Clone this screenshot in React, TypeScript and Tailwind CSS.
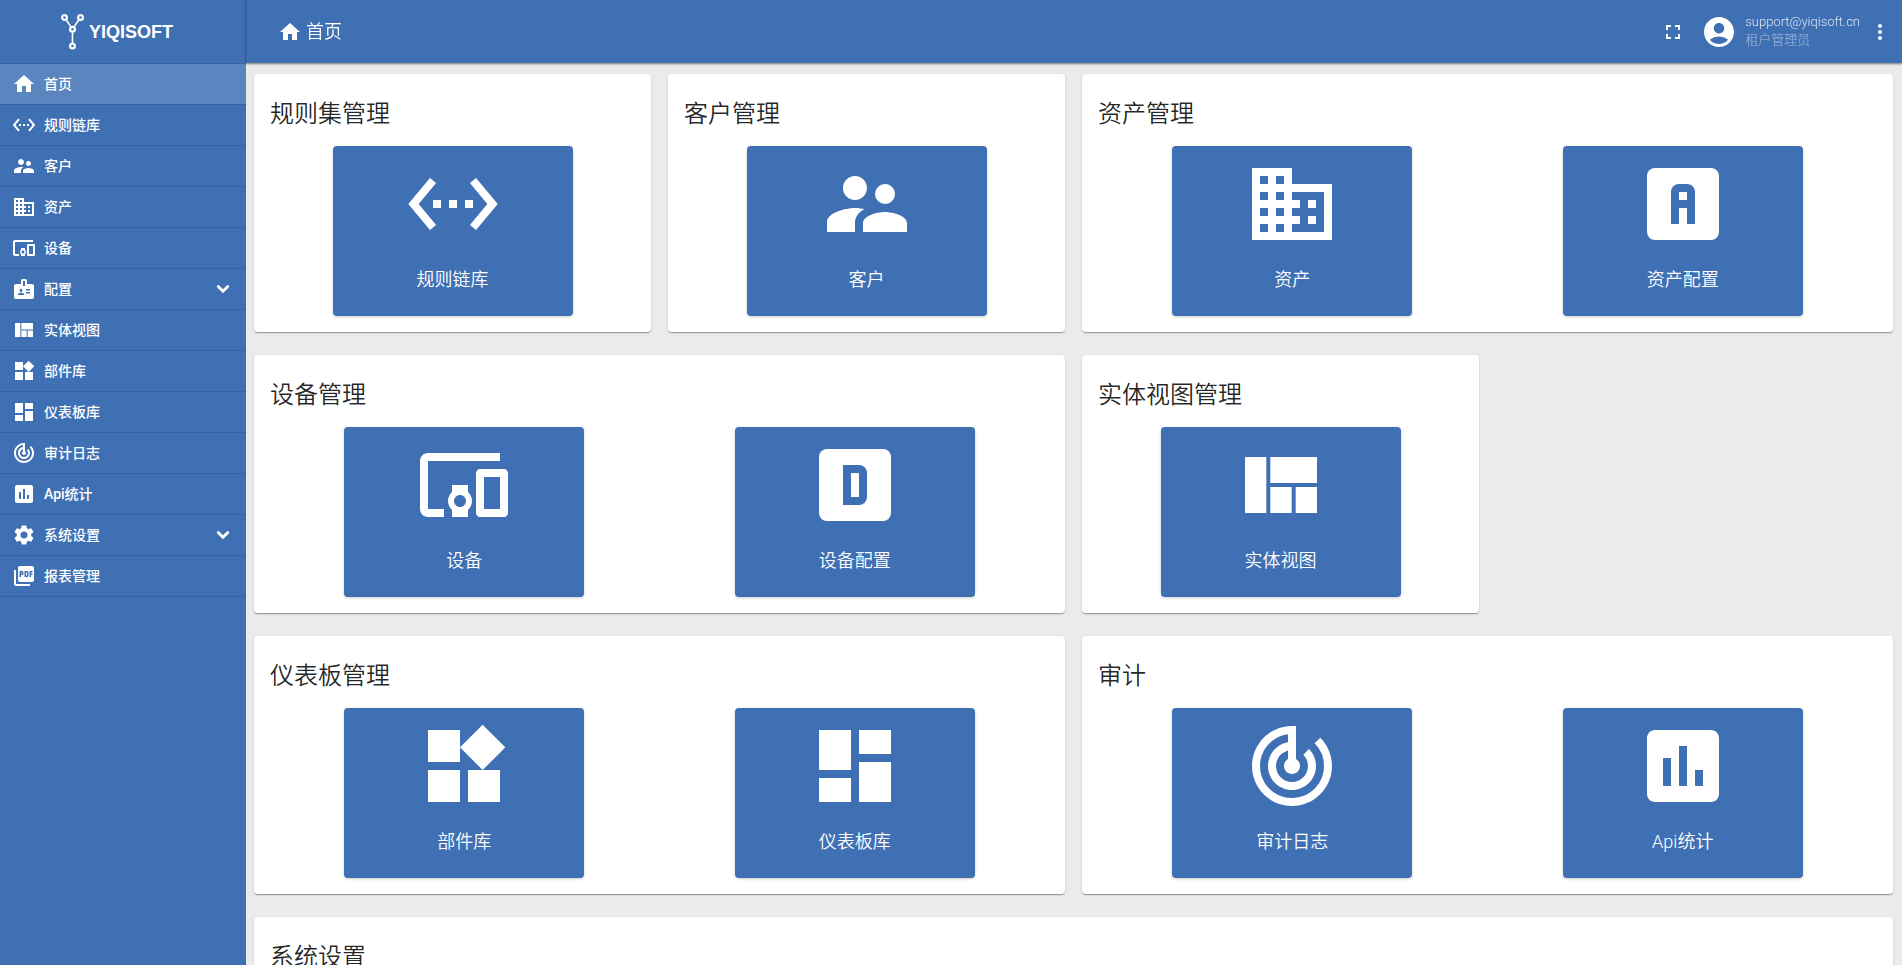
import type { ComponentType } from 'react';
import {
  MdAccountCircle,
  MdBadge,
  MdDashboard,
  MdDevicesOther,
  MdDomain,
  MdFullscreen,
  MdHome,
  MdInsertChart,
  MdMoreVert,
  MdPictureAsPdf,
  MdSettings,
  MdSettingsEthernet,
  MdSupervisorAccount,
  MdTrackChanges,
  MdWidgets,
} from 'react-icons/md';

type Icon = ComponentType<{ className?: string }>;

type MenuItem = {
  label: string;
  icon: Icon;
  active?: boolean;
  expandable?: boolean;
};

type Tile = {
  label: string;
  icon: Icon;
};

type Section = {
  title: string;
  wide?: boolean;
  full?: boolean;
  tiles: Tile[];
};

const ViewQuiltIcon: Icon = ({ className }) => (
  <svg viewBox="0 0 24 24" fill="currentColor" className={className} aria-hidden="true">
    <rect x="3" y="5" width="5.33" height="14" />
    <rect x="9.33" y="5" width="11.67" height="6.5" />
    <rect x="9.33" y="12.5" width="5.33" height="6.5" />
    <rect x="15.67" y="12.5" width="5.33" height="6.5" />
  </svg>
);

const AssetProfileIcon: Icon = ({ className }) => (
  <svg viewBox="0 0 24 24" fill="currentColor" className={className} aria-hidden="true">
    <rect x="3" y="3" width="18" height="18" rx="2" />
    <rect x="9" y="7" width="6" height="6" rx="2" fill="#3f70b4" />
    <rect x="9" y="9" width="6" height="8" fill="#3f70b4" />
    <rect x="11" y="9" width="2" height="2" />
    <rect x="11" y="13" width="2" height="4" />
  </svg>
);

const DeviceProfileIcon: Icon = ({ className }) => (
  <svg viewBox="0 0 24 24" fill="currentColor" className={className} aria-hidden="true">
    <rect x="3" y="3" width="18" height="18" rx="2" />
    <rect x="9" y="7" width="6" height="10" rx="2" fill="#3f70b4" />
    <rect x="9" y="7" width="3" height="10" fill="#3f70b4" />
    <rect x="11" y="9" width="2" height="6" />
  </svg>
);

const menuItems: MenuItem[] = [
  { label: '首页', icon: MdHome, active: true },
  { label: '规则链库', icon: MdSettingsEthernet },
  { label: '客户', icon: MdSupervisorAccount },
  { label: '资产', icon: MdDomain },
  { label: '设备', icon: MdDevicesOther },
  { label: '配置', icon: MdBadge, expandable: true },
  { label: '实体视图', icon: ViewQuiltIcon },
  { label: '部件库', icon: MdWidgets },
  { label: '仪表板库', icon: MdDashboard },
  { label: '审计日志', icon: MdTrackChanges },
  { label: 'Api统计', icon: MdInsertChart },
  { label: '系统设置', icon: MdSettings, expandable: true },
  { label: '报表管理', icon: MdPictureAsPdf },
];

const sections: Section[] = [
  { title: '规则集管理', tiles: [{ label: '规则链库', icon: MdSettingsEthernet }] },
  { title: '客户管理', tiles: [{ label: '客户', icon: MdSupervisorAccount }] },
  {
    title: '资产管理',
    wide: true,
    tiles: [
      { label: '资产', icon: MdDomain },
      { label: '资产配置', icon: AssetProfileIcon },
    ],
  },
  {
    title: '设备管理',
    wide: true,
    tiles: [
      { label: '设备', icon: MdDevicesOther },
      { label: '设备配置', icon: DeviceProfileIcon },
    ],
  },
  { title: '实体视图管理', tiles: [{ label: '实体视图', icon: ViewQuiltIcon }] },
  {
    title: '仪表板管理',
    wide: true,
    tiles: [
      { label: '部件库', icon: MdWidgets },
      { label: '仪表板库', icon: MdDashboard },
    ],
  },
  {
    title: '审计',
    wide: true,
    tiles: [
      { label: '审计日志', icon: MdTrackChanges },
      { label: 'Api统计', icon: MdInsertChart },
    ],
  },
  { title: '系统设置', full: true, tiles: [] },
];

const Logo = () => (
  <a href="#" className="flex h-16 shrink-0 items-center justify-center border-b border-[#38639f] pr-3">
    <svg viewBox="0 0 24 36" className="h-9 w-6" fill="none" stroke="white" aria-hidden="true">
      <circle cx="3.5" cy="3.5" r="2.4" strokeWidth="2.2" />
      <circle cx="19.5" cy="3.5" r="2.4" strokeWidth="2.2" />
      <circle cx="11.5" cy="15.2" r="2.4" strokeWidth="2.2" />
      <circle cx="11.5" cy="32" r="2.4" strokeWidth="2.2" />
      <path d="M5.4 6.2L9.8 12.6M17.6 6.2L13.2 12.6M11.5 18.4v10.4" strokeWidth="1.6" />
    </svg>
    <span className="ml-1 font-['Liberation_Sans',sans-serif] text-lg font-bold">YIQISOFT</span>
  </a>
);

const Sidebar = () => (
  <aside className="flex w-[246px] shrink-0 flex-col bg-[#3f70b4]">
    <Logo />
    <nav>
      <ul>
        {menuItems.map(({ label, icon: ItemIcon, active, expandable }) => (
          <li key={label} className="border-b border-[#38639f]">
            <a
              href="#"
              className={`flex h-10 items-center gap-2 pr-4 pl-3 text-sm font-medium ${active ? 'bg-white/15' : ''}`}
            >
              <ItemIcon className="size-6 shrink-0" />
              <span className="flex-1">{label}</span>
              {expandable && (
                <svg viewBox="0 0 14 10" className="h-[10px] w-[14px]" fill="none" stroke="white" strokeWidth="2.8" strokeLinecap="round" aria-hidden="true">
                  <path d="M2.2 2.4L7 7.2L11.8 2.4" />
                </svg>
              )}
            </a>
          </li>
        ))}
      </ul>
    </nav>
  </aside>
);

const Toolbar = () => (
  <header className="z-10 flex h-[63px] shrink-0 items-center bg-[#3f70b4] pr-2.5 pl-8 shadow-[inset_1px_0_0_#3a67a6,0_1px_2px_rgba(0,0,0,0.5)]">
    <h1 className="flex flex-1 items-center gap-1 text-lg font-[350]">
      <MdHome className="size-6" />
      首页
    </h1>
    <button type="button" aria-label="全屏" className="mr-4">
      <MdFullscreen className="size-6" />
    </button>
    <MdAccountCircle className="mr-2 size-9" />
    <div className="mr-2 pb-0.5 text-[13px] leading-[18px] font-light">
      <div className="text-white/80">support@yiqisoft.cn</div>
      <div className="text-white/50">租户管理员</div>
    </div>
    <button type="button" aria-label="更多">
      <MdMoreVert className="size-6" />
    </button>
  </header>
);

const SectionCard = ({ title, wide, full, tiles }: Section) => (
  <section
    className={`rounded bg-white p-4 shadow-[0_2px_1px_-1px_rgba(0,0,0,0.2),0_1px_1px_rgba(0,0,0,0.14),0_1px_3px_rgba(0,0,0,0.12)] ${
      full ? 'col-span-4' : wide ? 'col-span-2' : ''
    }`}
  >
    <h2 className="mb-2 text-2xl leading-12 font-[350] text-black/87">{title}</h2>
    <div className={`grid justify-items-center gap-0.5 ${wide ? 'grid-cols-2' : ''}`}>
      {tiles.map(({ label, icon: TileIcon }) => (
        <a
          key={label}
          href="#"
          className="flex h-[170px] w-60 flex-col items-center rounded bg-[#3f70b4] pt-2.5 text-lg leading-6 font-[350] text-white shadow-[0_1px_3px_rgba(0,0,0,0.2)]"
        >
          <TileIcon className="mb-4 size-24" />
          {label}
        </a>
      ))}
    </div>
  </section>
);

const App = () => {
  return (
    <div className="flex h-screen overflow-hidden font-[Roboto,'Noto_Sans_CJK_SC',sans-serif] text-white" lang="zh-CN">
      <Sidebar />
      <div className="flex min-w-0 flex-1 flex-col">
        <Toolbar />
        <main className="flex-1 overflow-y-auto bg-[#ebebeb] [scrollbar-width:none]">
          <div className="grid auto-rows-[258px] grid-cols-4 gap-x-[17px] gap-y-[23px] pt-[11px] pr-[9px] pb-2 pl-2">
            {sections.map((section) => (
              <SectionCard key={section.title} {...section} />
            ))}
          </div>
        </main>
      </div>
    </div>
  );
};

export default App;
